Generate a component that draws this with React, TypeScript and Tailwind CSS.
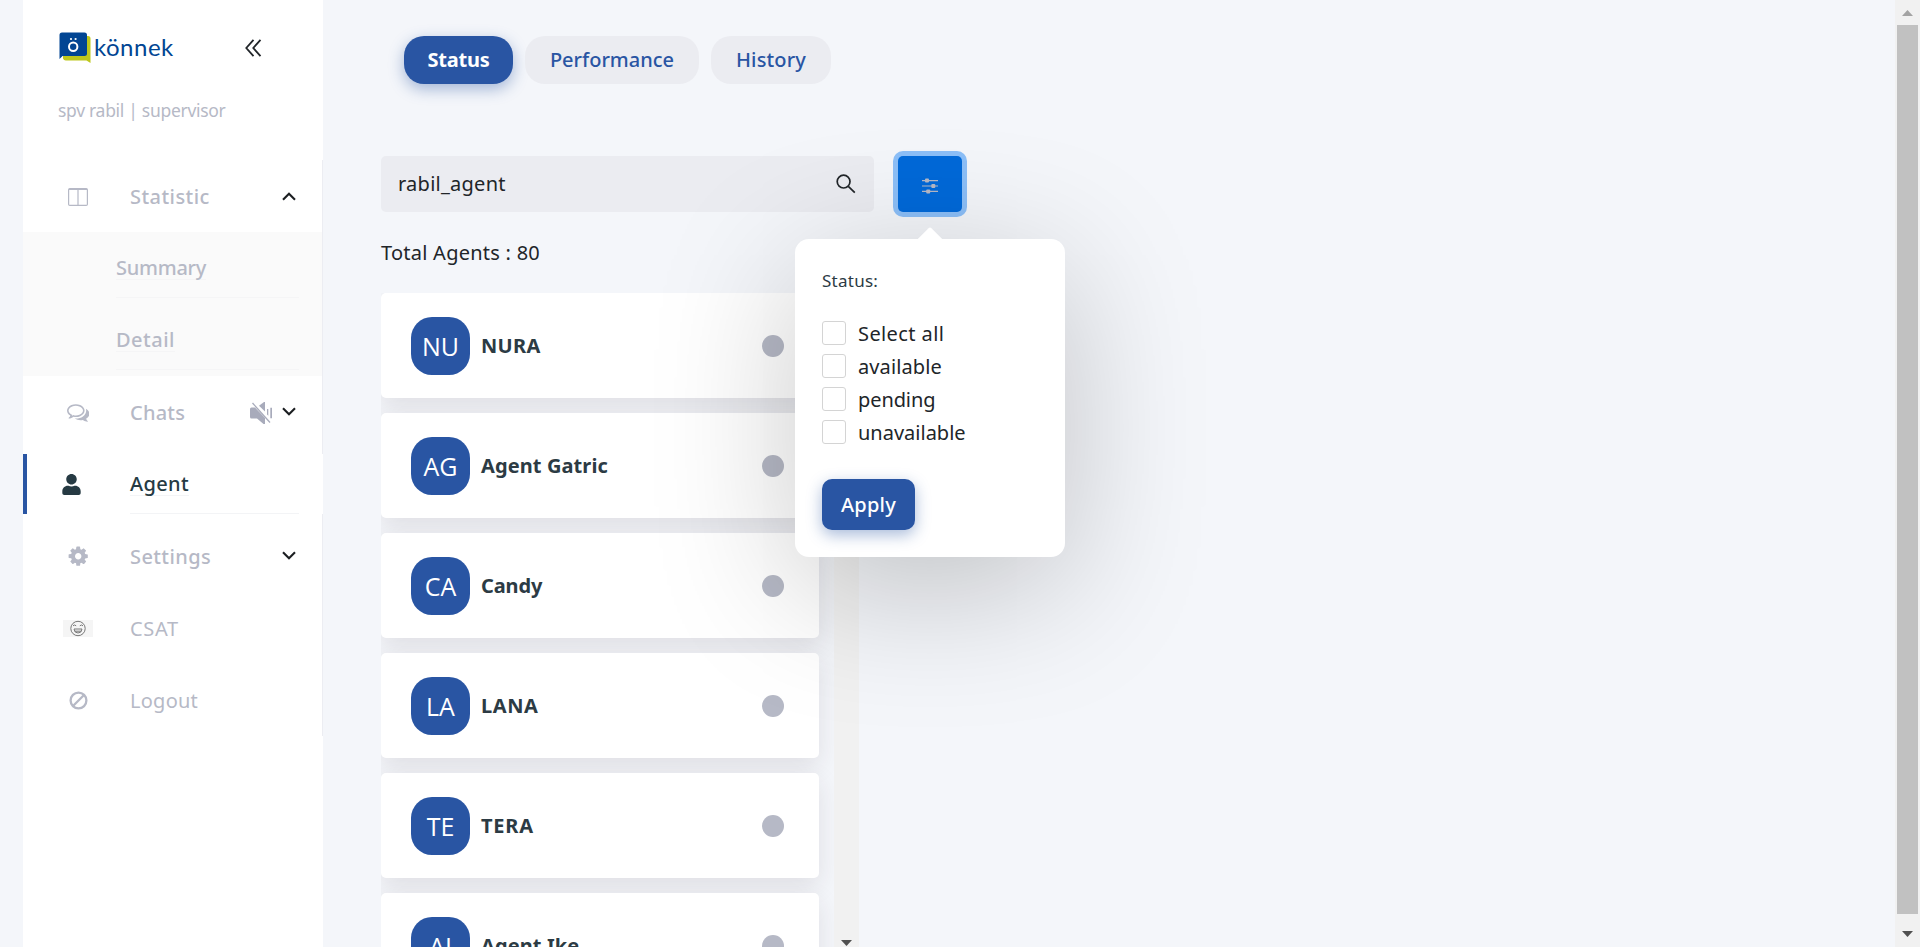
import React from "react";
import { FaUser } from "react-icons/fa";

type Agent = { initials: string; name: string; tracking: string };

const agents: Agent[] = [
  { initials: "NU", name: "NURA", tracking: "tracking-[0.3px]" },
  { initials: "AG", name: "Agent Gatric", tracking: "tracking-[0.1px]" },
  { initials: "CA", name: "Candy", tracking: "tracking-[-0.1px]" },
  { initials: "LA", name: "LANA", tracking: "tracking-[0.6px]" },
  { initials: "TE", name: "TERA", tracking: "tracking-[0.8px]" },
  { initials: "AI", name: "Agent Ike", tracking: "tracking-[0.1px]" },
];

const statuses = [
  { label: "Select all", tracking: "tracking-[0.4px]" },
  { label: "available", tracking: "tracking-[0.1px]" },
  { label: "pending", tracking: "tracking-[-0.1px]" },
  { label: "unavailable", tracking: "tracking-normal" },
];

function Logo() {
  return (
    <svg width="33" height="32" viewBox="0 0 33 32">
      <path d="M4 28.5V7a3 3 0 0 1 3-3h22a2.500 2.500 0 0 1 2.500 2.500V31l-4-2.600H7a3 3 0 0 1-3-2z" fill="#bec71c" />
      <path d="M.5 3A2.500 2.500 0 0 1 3 .5h22.500A2.500 2.500 0 0 1 28 3v18.500a2.500 2.500 0 0 1-2.500 2.500H3.500L.5 27z" fill="#014593" />
      <circle cx="14.200" cy="14.700" r="4.200" fill="none" stroke="#fff" strokeWidth="2" />
      <circle cx="12" cy="7" r="1.100" fill="#fff" />
      <circle cx="16.600" cy="7" r="1.100" fill="#fff" />
    </svg>
  );
}

function CollapseIcon() {
  return (
    <svg width="17" height="18" viewBox="0 0 17 18" fill="none" stroke="#212529" strokeWidth="1.800">
      <path d="M8.500.8 1.300 9l7.200 8.200M15.500.8 8.300 9l7.200 8.200" />
    </svg>
  );
}

function Chevron({ up = false }: { up?: boolean }) {
  return (
    <svg
      className={up ? "" : "mb-[3px]"}
      width="14"
      height="9"
      viewBox="0 0 14 9"
      fill="none"
      stroke="#1b1e21"
      strokeWidth="2.100"
    >
      <path d={up ? "M1 7.800 7 1.800l6 6" : "M1 1.200l6 6 6-6"} />
    </svg>
  );
}

function ColumnsIcon() {
  return (
    <svg width="20" height="18" viewBox="0 0 20 18" fill="none" stroke="#b6b9c6">
      <rect x=".6" y=".6" width="18.800" height="16.800" rx="1.200" strokeWidth="1.200" />
      <path d="M1 1.400h18" strokeWidth="1.200" />
      <path d="M10 1v16.500" strokeWidth="1.200" />
    </svg>
  );
}

function CommentsIcon() {
  return (
    <svg width="22.400" height="22.400" viewBox="0 0 1792 1792" fill="#b6b9c6">
      <path d="M704 384q-153 0-286 52t-211.500 141-78.500 191q0 82 53 158t149 132l97 56-35 84q34-20 62-39l44-31 53 10q78 14 153 14 153 0 286-52t211.500-141 78.500-191-78.500-191-211.500-141-286-52zm0-128q191 0 353.500 68.500t256.500 186.500 94 257-94 257-256.500 186.500-353.500 68.500q-86 0-176-16-124 88-278 128-36 9-86 16h-3q-11 0-20.500-8t-11.500-21q-1-3-1-6.500t.5-6.500 2-6l2.500-5 3.500-5.500 4-5 4.500-5 4-4.500q5-6 23-25t26-29.500 22.500-29 25-38.500 20.500-44q-124-72-195-177t-71-224q0-139 94-257t256.500-186.500 353.500-68.500zm822 1169q10 24 20.500 44t25 38.500 22.500 29 26 29.500 23 25q1 1 4 4.500t4.500 5 4 5 3.500 5.500l2.500 5 2 6 .5 6.500-1 6.500q-3 14-13 22t-22 7q-50-7-86-16-154-40-278-128-90 16-176 16-271 0-472-132 58 4 88 4 161 0 309-45t264-129q125-92 192-212t67-254q0-77-23-152 129 71 204 178t75 230q0 120-71 224.500t-195 176.500z" />
    </svg>
  );
}

function MutedIcon() {
  return (
    <svg width="22" height="22" viewBox="0 0 22 22" fill="#a8abbb">
      <path d="M0 7a1.500 1.500 0 0 1 1.500-1.500H5L15 16v6h-1.500L7 16.500H1.500A1.500 1.500 0 0 1 0 15z" />
      <path d="M14 0h1v9.500L9 3.800z" />
      <path d="M2.500 1 20 20.500" stroke="#a8abbb" strokeWidth="1.300" />
      <path d="M17 7v5.500l1.300 1.300V7zM20.300 5.800h1.700v10.400h-1.700z" />
    </svg>
  );
}

function CogIcon() {
  return (
    <svg width="22.400" height="22.400" viewBox="0 0 1792 1792" fill="#b6b9c6">
      <path d="M1152 896q0-106-75-181t-181-75-181 75-75 181 75 181 181 75 181-75 75-181zm512-109v222q0 12-8 23t-20 13l-185 28q-19 54-39 91 35 50 107 138 10 12 10 25t-9 23q-27 37-99 108t-94 71q-12 0-26-9l-138-108q-44 23-91 38-16 136-29 186-7 28-36 28h-222q-14 0-24.500-8.500t-11.500-21.500l-28-184q-49-16-90-37l-141 107q-10 9-25 9-14 0-25-11-126-114-165-168-7-10-7-23 0-12 8-23 15-21 51-66.500t54-70.500q-27-50-41-99l-183-27q-13-2-21-12.500t-8-23.500v-222q0-12 8-23t19-13l186-28q14-46 39-92-40-57-107-138-10-12-10-24 0-10 9-23 26-36 98.500-107.500t94.500-71.500q13 0 26 10l138 107q44-23 91-38 16-136 29-186 7-28 36-28h222q14 0 24.500 8.500t11.500 21.500l28 184q49 16 90 37l142-107q9-9 24-9 13 0 25 10 129 119 165 170 7 8 7 22 0 12-8 23-15 21-51 66.500t-54 70.500q26 50 41 98l183 28q13 2 21 12.500t8 23.500z" />
    </svg>
  );
}

function SmileIcon() {
  return (
    <svg width="30" height="17" viewBox="0 0 30 17" fill="none" stroke="#777" strokeWidth="1">
      <rect width="30" height="17" fill="#f5f5f5" stroke="none" />
      <circle cx="15" cy="8.500" r="7.200" />
      <path d="M10 5.800q1.600-1.600 3.200 0M16.800 5.800q1.600-1.600 3.200 0" />
      <path d="M11 9h8q-.3 4-4 4t-4-4zM12 11.200h6" />
    </svg>
  );
}

function BanIcon() {
  return (
    <svg width="19" height="19" viewBox="0 0 19 19" fill="none" stroke="#b6b9c6" strokeWidth="2.300">
      <circle cx="9.500" cy="9.500" r="7.900" />
      <path d="M4 15 15 4" />
    </svg>
  );
}

function SearchIcon() {
  return (
    <svg width="20" height="20" viewBox="0 0 20 20" fill="none" stroke="#212529" strokeWidth="1.700">
      <circle cx="7.600" cy="7.600" r="6.400" />
      <path d="m12.300 12.300 6.500 6.400" />
    </svg>
  );
}

function FilterIcon() {
  return (
    <svg width="16" height="16" viewBox="0 0 16 16" fill="#b6b9c6">
      <path d="M0 2h16v1.200H0zM0 7.400h16v1.200H0zM0 12.800h16V14H0z" />
      <rect x="3" y=".6" width="4" height="4" rx="1" />
      <rect x="9.300" y="6" width="4" height="4" rx="1" />
      <rect x="4.200" y="11.400" width="4" height="4" rx="1" />
    </svg>
  );
}

function NavRow({ icon, label, tracking, weight = "font-medium", children }: {
  icon: React.ReactNode;
  label: string;
  tracking: string;
  weight?: string;
  children?: React.ReactNode;
}) {
  return (
    <li className="flex h-[72px] items-center pt-px pr-[26px]">
      <span className="ml-[39px] flex w-[32px] justify-center">{icon}</span>
      <span className={`ml-[36px] text-[20px] leading-6 text-[#b6b9c6] ${weight} ${tracking}`}>{label}</span>
      <span className="ml-auto flex items-center gap-[10px]">{children}</span>
    </li>
  );
}

function SubRow({ label, tracking }: { label: string; tracking: string }) {
  return (
    <li className="flex h-[72px] items-center pr-[23px] pl-[93px]">
      <div className="flex h-[60px] flex-1 items-center border-b border-[#f5f5f6]">
        <span className={`h-6 border-b border-[#f5f5f6] text-[20px] leading-6 font-medium text-[#b6b9c6] ${tracking}`}>
          {label}
        </span>
      </div>
    </li>
  );
}

function Sidebar() {
  return (
    <aside className="flex w-[300px] shrink-0 flex-col bg-white">
      <div className="h-[160px] pl-9">
        <div className="flex h-[94px] pt-8">
          <Logo />
          <span className="ml-[2px] h-8 font-[Lato] text-[24px] leading-[29px] tracking-[0.5px] text-[#014593]">könnek</span>
          <span className="ml-[71px] pt-[7px]">
            <CollapseIcon />
          </span>
        </div>
        <p className="-ml-px text-[17.5px] leading-8 tracking-[-0.3px] text-[#b6b9c6]">spv rabil | supervisor</p>
      </div>
      <ul className="border-r border-[#ecedf2]">
        <NavRow icon={<ColumnsIcon />} label="Statistic" tracking="tracking-[0.45px]">
          <Chevron up />
        </NavRow>
        <li>
          <ul className="bg-[#fafafa]">
            <SubRow label="Summary" tracking="tracking-[-0.25px]" />
            <SubRow label="Detail" tracking="tracking-[0.5px]" />
          </ul>
        </li>
        <NavRow icon={<CommentsIcon />} label="Chats" tracking="tracking-[0.2px]">
          <MutedIcon />
          <Chevron />
        </NavRow>
        <li className="py-1.5">
          <a className="-mr-px flex h-[60px] items-center border-l-4 border-[#2955a3] bg-white pr-6 text-[#263a43]">
            <FaUser className="ml-[35px] h-[21px] w-[19px]" />
            <div className="ml-[49px] flex h-[60px] flex-1 items-center border-b border-[#f3f4f6]">
              <span className="h-6 border-b border-[#f3f4f6] text-[20px] leading-6 font-medium tracking-[0.35px]">Agent</span>
            </div>
          </a>
        </li>
        <NavRow icon={<CogIcon />} label="Settings" tracking="tracking-[0.4px]">
          <Chevron />
        </NavRow>
        <NavRow icon={<SmileIcon />} label="CSAT" weight="font-normal" tracking="tracking-[0.7px]" />
        <NavRow icon={<BanIcon />} label="Logout" weight="font-normal" tracking="tracking-[0.25px]" />
      </ul>
    </aside>
  );
}

function FilterPopover() {
  return (
    <div className="absolute top-[83px] left-[-103px] w-[270px] rounded-[14px] bg-white px-[27px] pt-[30px] pb-[27px] shadow-[0_30px_140px_rgba(0,0,0,0.22)]">
      <div className="absolute top-[-8px] left-[125px] size-5 rotate-45 rounded-[2px] bg-white" />
      <p className="text-[17px] leading-6 tracking-[0.25px] text-[#2c3b44]">Status:</p>
      <div className="mt-7 flex flex-col gap-[9px]">
        {statuses.map((s) => (
          <label key={s.label} className="flex h-6 items-center gap-3">
            <span className="size-6 rounded-[3px] border border-[#d4d4d4] bg-white" />
            <span className={`pt-px text-[20px] leading-6 text-[#212529] ${s.tracking}`}>{s.label}</span>
          </label>
        ))}
      </div>
      <button className="mt-[35px] flex h-[51px] w-[93px] items-center justify-center rounded-[10px] bg-[#2955a3] text-[20px] font-medium tracking-[0.2px] text-white shadow-[0_5px_15px_rgba(41,85,163,0.4)]">
        Apply
      </button>
    </div>
  );
}

function AgentCard({ agent }: { agent: Agent }) {
  return (
    <li className="flex h-[105px] shrink-0 items-center rounded-[5px] bg-white pr-[35px] pl-[30px] shadow-[0_8px_25px_rgba(51,40,50,0.11)]">
      <span className="flex h-[58px] w-[59px] items-center justify-center rounded-[21px] bg-[#2955a3] pt-[2px] font-[Open_Sans] text-[25px] leading-none text-white">
        {agent.initials}
      </span>
      <span className={`ml-[11px] text-[20px] leading-6 font-bold text-[#2c3b44] ${agent.tracking}`}>{agent.name}</span>
      <span className="ml-auto size-[22px] rounded-full bg-[#b6b9c6]" />
    </li>
  );
}

function Main() {
  return (
    <main className="flex min-w-0 flex-1 flex-col pl-[58px]">
      <nav className="mt-9 flex h-12 gap-3 pl-[23px] text-[20px] font-medium">
        <button className="w-[109px] rounded-[20px] bg-[#2955a3] font-bold tracking-[-0.2px] text-white shadow-[0_5px_15px_rgba(41,85,163,0.4)]">
          Status
        </button>
        <button className="w-[174px] rounded-[20px] bg-[#ebecf1] text-[#2955a3]">Performance</button>
        <button className="w-[120px] rounded-[20px] bg-[#ebecf1] tracking-[0.15px] text-[#2955a3]">History</button>
      </nav>
      <div className="mt-[72px] flex h-14 shrink-0 gap-6">
        <div className="flex w-[493px] items-center justify-between rounded-[5px] bg-[#ebecf1] pr-[18px] pl-[17px]">
          <span className="text-[20px] leading-6 tracking-[0.25px] text-[#212529]">rabil_agent</span>
          <SearchIcon />
        </div>
        <div className="relative z-10">
          <button className="flex h-14 w-16 items-center justify-center rounded-[5px] bg-[#0069d9] pt-1 shadow-[0_0_0_5px_#8cbff8]">
            <FilterIcon />
          </button>
          <FilterPopover />
        </div>
      </div>
      <p className="flex h-[81px] shrink-0 items-center text-[20px] tracking-[0.25px] text-[#212529]">Total Agents : 80</p>
      <div className="flex min-h-0 flex-1">
        <ul className="flex w-[453px] flex-col gap-[15px] overflow-hidden pr-[15px]">
          {agents.map((a) => (
            <AgentCard key={a.name} agent={a} />
          ))}
        </ul>
        <div className="flex w-[25px] flex-col items-center justify-end bg-[#f1f1f1] pb-px">
          <svg width="11" height="6" viewBox="0 0 11 6" fill="#505050">
            <path d="M0 0h11L5.500 6z" />
          </svg>
        </div>
      </div>
    </main>
  );
}

function PageScrollbar() {
  return (
    <div className="flex w-[25px] shrink-0 flex-col items-center bg-[#f1f1f1]">
      <div className="flex h-[25px] items-center">
        <svg width="11" height="6" viewBox="0 0 11 6" fill="#a3a3a3">
          <path d="M0 6h11L5.500 0z" />
        </svg>
      </div>
      <div className="w-[21px] flex-1 bg-[#c1c1c1]" />
      <div className="flex h-[33px] items-start pt-[17px]">
        <svg width="11" height="6" viewBox="0 0 11 6" fill="#505050">
          <path d="M0 0h11L5.500 6z" />
        </svg>
      </div>
    </div>
  );
}

export default function App() {
  return (
    <div className="flex h-[947px] w-full overflow-hidden bg-[#f4f6fa] pl-[23px] font-['Noto_Sans',sans-serif]">
      <Sidebar />
      <Main />
      <PageScrollbar />
    </div>
  );
}
